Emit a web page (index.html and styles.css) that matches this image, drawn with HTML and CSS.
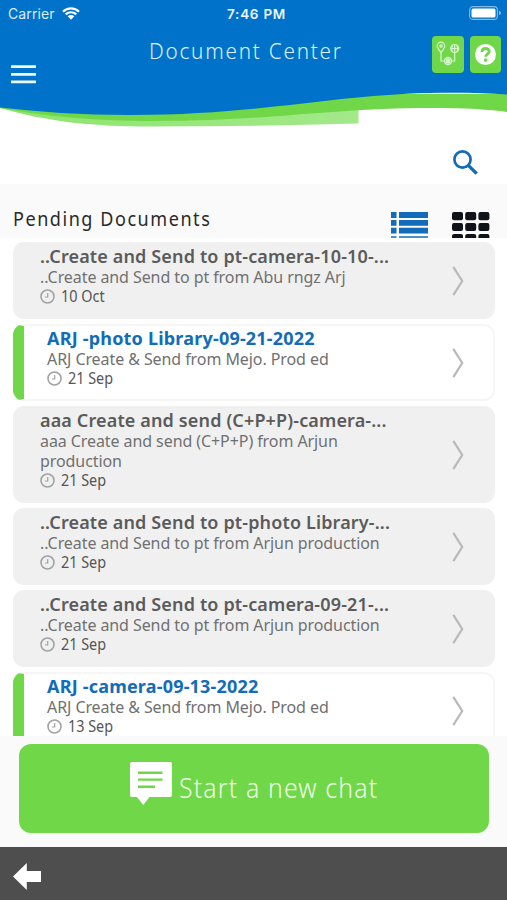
FILE: index.html
```html
<!DOCTYPE html>
<html lang="en">
<head>
<meta charset="utf-8">
<title>Document Center</title>
<link rel="stylesheet" href="styles.css">
</head>
<body>
<svg class="defs" width="0" height="0" aria-hidden="true">
  <symbol id="clock" viewBox="0 0 15 15"><circle cx="7.5" cy="7.5" r="6.5" fill="none" stroke="#a2a2a2" stroke-width="1.6"/><path d="M7.700 4v4H5" fill="none" stroke="#a2a2a2" stroke-width="1.2"/></symbol>
  <symbol id="chevron" viewBox="0 0 12 32"><path d="M1.300 1.800 10.200 16 1.300 30.200" fill="none" stroke="#b9b9b9" stroke-width="2.200"/></symbol>
</svg>
<div class="app">
  <header class="header">
    <svg class="wave" viewBox="0 0 507 130" aria-hidden="true">
      <defs><linearGradient id="pale" x1="0" x2="1"><stop offset="0" stop-color="#8de56e"/><stop offset="1" stop-color="#a3e88a"/></linearGradient></defs>
      <path d="M0 108C45 121 90 126.500 150 126.500C220 126.500 290 125.500 358.500 123.500V108L0 105Z" fill="url(#pale)"/>
      <path d="M0 108C45 116 90 121 155 121C270 121 330 108 432 108C465 108 490 109.500 507 112V94H0Z" fill="#70d749"/>
      <path d="M0 0H507V94.500C485 93 460 92.500 430 93C330 95 260 115 130 115C80 115 40 112 0 107.500Z" fill="#0072ca"/>
    </svg>
    <div class="status">
      <span class="carrier">Carrier</span>
      <svg class="wifi" width="18" height="13" viewBox="0 0 18 13"><path d="M1 4.700a11.500 11.500 0 0 1 16 0M3.700 7.400a7.600 7.600 0 0 1 10.600 0" fill="none" stroke="#fff" stroke-width="2.200"/><path d="M5.700 9.300a4.700 4.700 0 0 1 6.600 0L9 12.700Z" fill="#fff"/></svg>
      <span class="time">7:46 PM</span>
      <svg class="battery" width="32" height="14" viewBox="0 0 32 14"><rect x=".6" y=".6" width="27.800" height="12.800" rx="3.500" fill="none" stroke="#83bae6" stroke-width="1.100"/><rect x="2.500" y="2.400" width="24" height="9.200" rx="1.600" fill="#fff"/><path d="M30 5a2 2 0 0 1 0 4Z" fill="#83bae6"/></svg>
    </div>
    <div class="nav">
      <svg class="menu" width="25" height="19" viewBox="0 0 25 19"><path d="M0 1.700H25M0 9.300H25M0 16.800H25" stroke="#effaff" stroke-width="2.700"/></svg>
      <h1 class="title">Document Center</h1>
      <div class="actions">
        <span class="tile"><svg width="32" height="37" viewBox="0 0 32 37" fill="none" stroke="#d8f7d0" stroke-width="1.200"><path d="M9 16.500C6.500 13.500 5.200 11.800 5.200 10a3.800 3.800 0 0 1 7.600 0C12.800 11.800 11.500 13.500 9 16.500Z"/><circle cx="9" cy="10" r="1.200"/><path d="M9 16.500V25H12M22.700 16.500V25H20"/><circle cx="22.700" cy="12.500" r="4"/><path d="M18.700 12.500H26.700M22.700 8.500V16.500M20.500 9.200Q18.900 12.500 20.500 15.800M24.900 9.200Q26.500 12.500 24.900 15.800"/><circle cx="16" cy="25" r="3.600"/><path d="M12.500 25H19.500M16 21.500V28.500M13.500 22.500 18.500 27.500M18.500 22.500 13.500 27.500"/></svg></span>
        <span class="tile help"><svg width="31" height="37" viewBox="0 0 31 37"><circle cx="15.500" cy="18.500" r="10.500" fill="#fff"/><path d="M12 15.900C12 11.300 19.200 11.700 19.200 15.400C19.200 18 15.700 17.800 15.700 20.800" fill="none" stroke="#70d749" stroke-width="2.900"/><circle cx="15.700" cy="24.100" r="1.800" fill="#70d749"/></svg></span>
      </div>
    </div>
  </header>

  <div class="search"><svg width="27" height="27" viewBox="0 0 27 27" fill="none" stroke="#126cb9"><circle cx="10.500" cy="10.500" r="8.100" stroke-width="2.700"/><path d="m16.300 16.300 8.400 8.400" stroke-width="3.300"/></svg></div>

  <div class="section">
    <h2 class="heading">Pending Documents</h2>
    <svg class="view list-view" width="38" height="27" viewBox="0 0 38 27" fill="#126cb9"><path d="M0 0H5.500V6H0ZM8 0H37V6H8ZM0 8H5.500V13.700H0ZM8 8H37V13.700H8ZM0 15.800H5.500V21.500H0ZM8 15.800H37V21.500H8Z"/><path opacity=".75" d="M0 24H5.500V26H0ZM8 24H37V26H8Z"/></svg>
    <svg class="view" width="38" height="27" viewBox="0 0 38 27" fill="#101418"><rect width="11" height="8.300" rx="2"/><rect x="13.200" width="11" height="8.300" rx="2"/><rect x="26.400" width="11" height="8.300" rx="2"/><rect y="11" width="11" height="8" rx="2"/><rect x="13.200" y="11" width="11" height="8" rx="2"/><rect x="26.400" y="11" width="11" height="8" rx="2"/><path d="M0 26V24Q0 22 2 22H9Q11 22 11 24V26ZM13.200 26V24Q13.200 22 15.200 22H22.200Q24.200 22 24.200 24V26ZM26.400 26V24Q26.400 22 28.400 22H35.400Q37.400 22 37.400 24V26Z"/></svg>
  </div>

  <main class="list">
    <article class="card">
      <div class="body"><h3 class="name">..Create and Send to pt-camera-10-10-...</h3><p class="desc">..Create and Send to pt from Abu rngz Arj</p><p class="date"><svg><use href="#clock"/></svg><span>10 Oct</span></p></div>
      <svg class="chevron"><use href="#chevron"/></svg>
    </article>
    <article class="card unread">
      <div class="body"><h3 class="name">ARJ -photo Library-09-21-2022</h3><p class="desc">ARJ Create &amp; Send from Mejo. Prod ed</p><p class="date"><svg><use href="#clock"/></svg><span>21 Sep</span></p></div>
      <svg class="chevron"><use href="#chevron"/></svg>
    </article>
    <article class="card tall">
      <div class="body"><h3 class="name">aaa Create and send (C+P+P)-camera-...</h3><p class="desc">aaa Create and send (C+P+P) from Arjun<br>production</p><p class="date"><svg><use href="#clock"/></svg><span>21 Sep</span></p></div>
      <svg class="chevron"><use href="#chevron"/></svg>
    </article>
    <article class="card">
      <div class="body"><h3 class="name">..Create and Send to pt-photo Library-...</h3><p class="desc">..Create and Send to pt from Arjun production</p><p class="date"><svg><use href="#clock"/></svg><span>21 Sep</span></p></div>
      <svg class="chevron"><use href="#chevron"/></svg>
    </article>
    <article class="card">
      <div class="body"><h3 class="name">..Create and Send to pt-camera-09-21-...</h3><p class="desc">..Create and Send to pt from Arjun production</p><p class="date"><svg><use href="#clock"/></svg><span>21 Sep</span></p></div>
      <svg class="chevron"><use href="#chevron"/></svg>
    </article>
    <article class="card unread">
      <div class="body"><h3 class="name">ARJ -camera-09-13-2022</h3><p class="desc">ARJ Create &amp; Send from Mejo. Prod ed</p><p class="date"><svg><use href="#clock"/></svg><span>13 Sep</span></p></div>
      <svg class="chevron"><use href="#chevron"/></svg>
    </article>
  </main>

  <div class="chat-area">
    <div class="chat">
      <svg width="42" height="43" viewBox="0 0 42 43"><path d="M2 0H40Q42 0 42 2V33Q42 35 40 35H19.500L13.300 43 7 35H2Q0 35 0 33V2Q0 0 2 0Z" fill="#fff"/><path d="M8 10.800H32.500M8 17.600H32.500M8 24.700H25" stroke="#70d749" stroke-width="2.400"/></svg>
      <span class="chat-label">Start a new chat</span>
    </div>
  </div>
  <footer class="bottom"><svg width="28" height="27" viewBox="0 0 28 27"><path d="M0 13.500 13.800 0V8H28V19H13.800V27Z" fill="#fff"/></svg></footer>
</div>
</body>
</html>
```
FILE: styles.css
```css
* { box-sizing: border-box; }
body { margin: 0; background: #fff; font-family: "Noto Sans", "Open Sans", sans-serif; }
h1, h2, h3, p { margin: 0; }
svg { display: block; flex: none; }
.defs { position: absolute; }
.app { width: 507px; height: 900px; overflow: hidden; display: flex; flex-direction: column; }

.header { position: relative; height: 130px; flex: none; color: #fff; }
.wave { position: absolute; inset: 0; width: 507px; height: 130px; }
.status { position: relative; height: 27px; display: grid; grid-template-columns: 54px 130px 1fr 38px; align-items: center; padding-left: 8px; font-family: Inter, sans-serif; font-size: 13px; }
.carrier { color: #d9edff; font-size: 14px; letter-spacing: .1px; }
.time { font-size: 13.5px; font-weight: 600; letter-spacing: .75px; padding-left: 35px; white-space: nowrap; color: #eaf6ff; }
.battery { margin-top: -1px; }
.nav { position: relative; display: grid; grid-template-columns: 138px 1fr 75px; padding-left: 11px; }
.menu { margin-top: 38px; }
.title { font-size: 22px; line-height: 28px; font-weight: 350; letter-spacing: 1.9px; margin-top: 9px; color: #dff3ff; white-space: nowrap; transform: scaleX(.94); transform-origin: left; }
.actions { display: flex; gap: 6px; margin-top: 9px; }
.tile { width: 32px; height: 37px; border-radius: 4px; background: #70d749; }
.help { width: 31px; }

.search { height: 54px; flex: none; display: flex; justify-content: flex-end; padding: 19px 28px 0 0; }
.section { height: 54px; flex: none; background: #fafafa; display: flex; justify-content: flex-end; padding: 0 17px 0 13px; }
.heading { font-size: 20.5px; font-weight: 400; line-height: 26px; letter-spacing: 1.75px; margin: 21px auto 0 0; color: #2a2a2a; white-space: nowrap; transform: scaleX(.88); transform-origin: left; }
.view { margin-top: 28px; }
.list-view { margin-right: 23px; }

.list { height: 498px; flex: none; overflow: hidden; padding: 4px 12px 0 13px; display: flex; flex-direction: column; gap: 5px; }
.card { height: 77px; flex: none; border-radius: 11px; background: #f0f0f0; padding: 4px 31.5px 0 27px; display: flex; justify-content: space-between; color: #555; }
.tall { height: 97px; }
.unread { background: #fff; border: 2px solid #f6f6f6; border-left: 11px solid #70d749; padding: 2px 29.5px 0 23px; }
.name { font-size: 18px; line-height: 21px; font-weight: 600; letter-spacing: .14px; white-space: nowrap; color: #5b5b5b; }
.unread .name { color: #126cb9; font-weight: 700; letter-spacing: .2px; }
.desc { font-size: 16px; line-height: 20px; letter-spacing: -.08px; color: #707070; white-space: nowrap; }
.date { font-size: 16px; line-height: 19px; display: flex; align-items: center; gap: 6px; white-space: nowrap; }
.date span { transform: scaleX(.9); transform-origin: left; }
.date svg { width: 15px; height: 15px; }
.chevron { width: 12px; height: 32px; align-self: center; margin-bottom: 3px; }
.unread .chevron { margin-bottom: 1px; }

.chat-area { height: 111px; flex: none; background: #fafafa; padding: 8px 18px 0 19px; }
.chat { height: 89px; border-radius: 12px; background: #70d749; display: flex; gap: 7px; padding: 18px 0 0 111px; color: #effde9; font-size: 27px; font-weight: 300; line-height: 52px; white-space: nowrap; }
.chat-label { letter-spacing: 1.25px; transform: scaleX(.92); transform-origin: left; }
.bottom { height: 53px; flex: none; background: #4e4e4e; padding: 16px 0 0 13px; }
```
